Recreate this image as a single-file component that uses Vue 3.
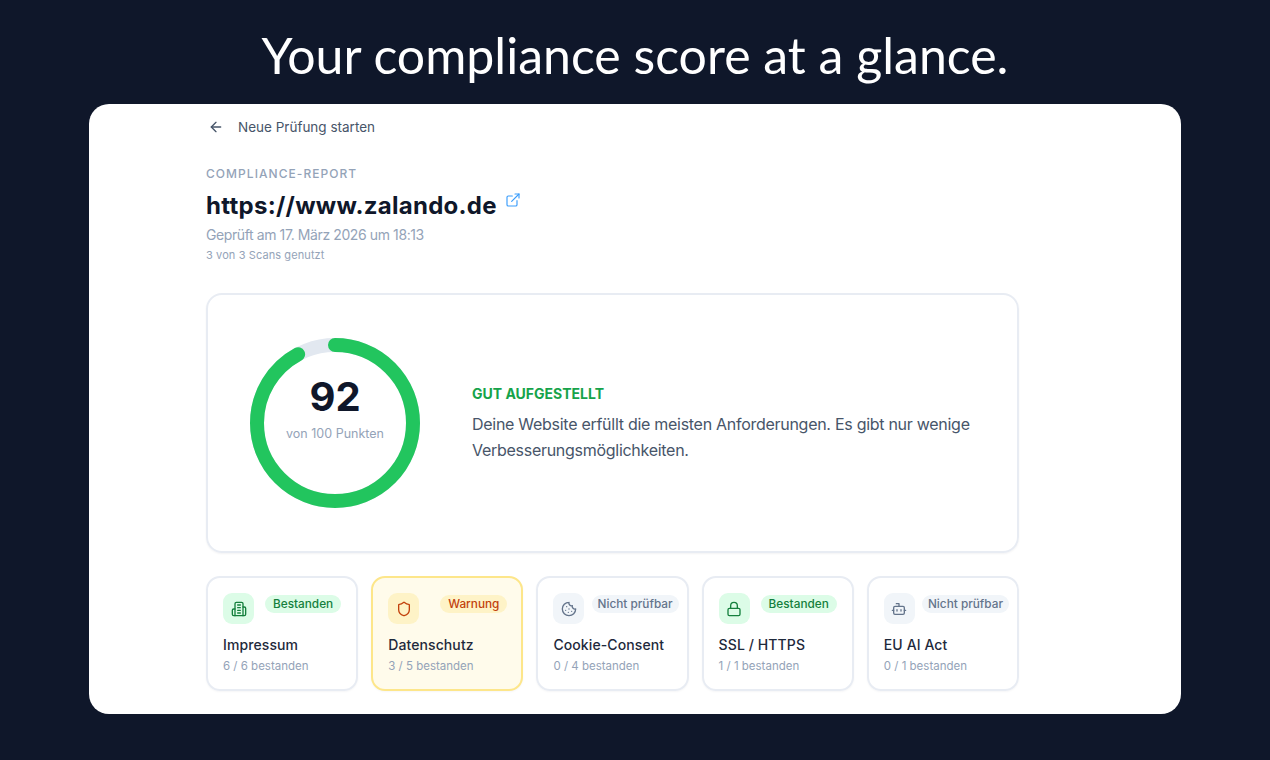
<script setup>
const circumference = 2 * Math.PI * 78
const score = 92

const checks = [
  { name: 'Impressum', status: 'Bestanden', tone: 'pass', detail: '6 / 6 bestanden', icon: 'building' },
  { name: 'Datenschutz', status: 'Warnung', tone: 'warn', detail: '3 / 5 bestanden', icon: 'shield' },
  { name: 'Cookie-Consent', status: 'Nicht prüfbar', tone: 'na', detail: '0 / 4 bestanden', icon: 'cookie' },
  { name: 'SSL / HTTPS', status: 'Bestanden', tone: 'pass', detail: '1 / 1 bestanden', icon: 'lock' },
  { name: 'EU AI Act', status: 'Nicht prüfbar', tone: 'na', detail: '0 / 1 bestanden', icon: 'bot' }
]
</script>

<template>
  <div class="page">
    <h1 class="headline">Your compliance score at a glance.</h1>

    <div class="sheet">
      <div class="report">
        <div class="back">
          <svg width="16" height="16" viewBox="0 0 24 24" fill="none" stroke="currentColor" stroke-width="2" stroke-linecap="round" stroke-linejoin="round">
            <path d="M19 12H5" />
            <path d="M12 19l-7-7 7-7" />
          </svg>
          <span>Neue Prüfung starten</span>
        </div>

        <div class="eyebrow">COMPLIANCE-REPORT</div>
        <div class="url-row">
          <span class="url">https://www.zalando.de</span>
          <svg class="url-link" width="16" height="16" viewBox="0 0 24 24" fill="none" stroke="currentColor" stroke-width="1.75" stroke-linecap="round" stroke-linejoin="round">
            <path d="M18 13v6a2 2 0 0 1-2 2H5a2 2 0 0 1-2-2V8a2 2 0 0 1 2-2h6" />
            <path d="M15 3h6v6" />
            <path d="M10 14L21 3" />
          </svg>
        </div>
        <div class="checked">Geprüft am 17. März 2026 um 18:13</div>
        <div class="scans">3 von 3 Scans genutzt</div>

        <!-- Score -->
        <div class="score-card">
          <div class="ring">
            <svg width="170" height="170" viewBox="0 0 170 170">
              <circle cx="85" cy="85" r="78" fill="none" stroke="#e2e8f0" stroke-width="14" />
              <circle
                cx="85" cy="85" r="78" fill="none" stroke="#22c55e" stroke-width="14" stroke-linecap="round"
                transform="rotate(-90 85 85)"
                :stroke-dasharray="`${circumference * score / 100} ${circumference}`"
              />
            </svg>
            <div class="ring-label">
              <div class="ring-value">{{ score }}</div>
              <div class="ring-sub">von 100 Punkten</div>
            </div>
          </div>
          <div class="verdict">
            <div class="verdict-title">GUT AUFGESTELLT</div>
            <p>Deine Website erfüllt die meisten Anforderungen. Es gibt nur wenige Verbesserungsmöglichkeiten.</p>
          </div>
        </div>

        <!-- Categories -->
        <div class="checks">
          <div v-for="item in checks" :key="item.name" class="check" :class="item.tone">
            <div class="check-top">
              <div class="check-icon">
                <svg width="16" height="16" viewBox="0 0 24 24" fill="none" stroke="currentColor" stroke-width="2" stroke-linecap="round" stroke-linejoin="round">
                  <template v-if="item.icon === 'building'">
                    <path d="M6 22V4a2 2 0 0 1 2-2h8a2 2 0 0 1 2 2v18Z" />
                    <path d="M6 12H4a2 2 0 0 0-2 2v6a2 2 0 0 0 2 2h2" />
                    <path d="M18 9h2a2 2 0 0 1 2 2v9a2 2 0 0 1-2 2h-2" />
                    <path d="M10 6h4M10 10h4M10 14h4M10 18h4" />
                  </template>
                  <path v-else-if="item.icon === 'shield'" d="M20 13c0 5-3.5 7.5-7.66 8.95a1 1 0 0 1-.67-.01C7.5 20.5 4 18 4 13V6a1 1 0 0 1 1-1c2 0 4.5-1.2 6.24-2.72a1.17 1.17 0 0 1 1.52 0C14.51 3.81 17 5 19 5a1 1 0 0 1 1 1z" />
                  <template v-else-if="item.icon === 'cookie'">
                    <path d="M12 2a10 10 0 1 0 10 10 4 4 0 0 1-5-5 4 4 0 0 1-5-5" />
                    <path d="M8.5 8.5v.01M16 15.5v.01M12 12v.01M11 17v.01M7 14v.01" />
                  </template>
                  <template v-else-if="item.icon === 'lock'">
                    <rect x="3" y="11" width="18" height="11" rx="2" />
                    <path d="M7 11V7a5 5 0 0 1 10 0v4" />
                  </template>
                  <template v-else>
                    <path d="M12 8V4H8" />
                    <rect x="4" y="8" width="16" height="12" rx="2" />
                    <path d="M2 14h2M20 14h2M15 13v2M9 13v2" />
                  </template>
                </svg>
              </div>
              <span class="pill">{{ item.status }}</span>
            </div>
            <div class="check-name">{{ item.name }}</div>
            <div class="check-detail">{{ item.detail }}</div>
          </div>
        </div>
      </div>
    </div>
  </div>
</template>

<style>
html, body {
  margin: 0;
  background: #0f172a;
}
</style>

<style scoped>
.page {
  height: 760px;
  box-sizing: border-box;
  background: #0f172a;
  padding: 0 89px;
  font-family: Inter, "Liberation Sans", sans-serif;
  overflow: hidden;
}

.headline {
  margin: 0;
  height: 104px;
  line-height: 110px;
  text-align: center;
  color: #fff;
  font-family: Lato, sans-serif;
  font-size: 50px;
  font-weight: 400;
}

.sheet {
  height: 610px;
  background: #fff;
  border-radius: 20px;
  overflow: hidden;
}

.report {
  width: 813px;
  margin-left: 117px;
}

.back {
  display: flex;
  align-items: center;
  gap: 14px;
  height: 46px;
  margin-left: 2px;
  color: #475569;
  font-size: 13.5px;
  font-weight: 400;
}

.back svg {
  flex: none;
}

.eyebrow {
  margin-top: 16px;
  color: #94a3b8;
  font-size: 12px;
  font-weight: 500;
  letter-spacing: 1.05px;
  line-height: 16px;
}

.url-row {
  display: flex;
  align-items: flex-start;
  gap: 8px;
  margin-top: 8px;
}

.url {
  color: #0f172a;
  font-size: 24px;
  font-weight: 700;
  letter-spacing: 0.28px;
  line-height: 32px;
}

.url-link {
  margin-top: 2px;
  color: #3b9dfb;
}

.checked {
  margin-top: 3px;
  color: #94a3b8;
  font-size: 14px;
  letter-spacing: -0.4px;
  line-height: 20px;
}

.scans {
  margin-top: 2px;
  color: #94a3b8;
  font-size: 11px;
  letter-spacing: 0.1px;
  line-height: 16px;
}

.score-card {
  display: flex;
  align-items: center;
  gap: 52px;
  box-sizing: border-box;
  height: 260px;
  margin-top: 30px;
  padding: 0 40px 0 42px;
  border: 2px solid #e8ecf3;
  border-radius: 16px;
  box-shadow: 0 1px 2px rgba(15, 23, 42, 0.05);
}

.ring {
  position: relative;
  flex: none;
  width: 170px;
  height: 170px;
}

.ring svg {
  display: block;
}

.ring-label {
  position: absolute;
  inset: 0 0 32px;
  display: flex;
  flex-direction: column;
  align-items: center;
  justify-content: center;
}

.ring-value {
  color: #0f172a;
  font-size: 40px;
  font-weight: 700;
  line-height: 48px;
}

.ring-sub {
  margin-top: 5px;
  color: #94a3b8;
  font-size: 12.5px;
  line-height: 16px;
}

.verdict {
  flex: 1;
}

.verdict-title {
  color: #16a34a;
  font-size: 14px;
  font-weight: 700;
  line-height: 20px;
}

.verdict p {
  margin: 7px 0 0;
  color: #475569;
  font-size: 16px;
  letter-spacing: -0.28px;
  line-height: 26px;
}

.checks {
  display: grid;
  grid-template-columns: repeat(5, 1fr);
  gap: 13px;
  margin-top: 23px;
}

.check {
  box-sizing: border-box;
  height: 115px;
  padding: 15px 0 0 15px;
  border: 2px solid #e8ecf3;
  border-radius: 14px;
  box-shadow: 0 1px 2px rgba(15, 23, 42, 0.04);
  overflow: hidden;
}

.check.warn {
  background: #fffbeb;
  border-color: #fde68a;
}

.check-top {
  display: flex;
  align-items: flex-start;
  justify-content: space-between;
  padding-right: 15px;
}

.check-icon {
  display: flex;
  align-items: center;
  justify-content: center;
  flex: none;
  width: 31px;
  height: 31px;
  border-radius: 9px;
}

.pill {
  margin-top: 2px;
  padding: 0 8px;
  border-radius: 10px;
  font-size: 11.8px;
  font-weight: 500;
  line-height: 18px;
  white-space: nowrap;
}

.pass .check-icon,
.pass .pill {
  background: #dcfce7;
  color: #15803d;
}

.warn .check-icon,
.warn .pill {
  background: #fef3c7;
  color: #c2410c;
}

.na .check-icon,
.na .pill {
  background: #f1f5f9;
  color: #64748b;
}

.warn .check-top {
  padding-right: 14px;
}

.na .check-top {
  padding-right: 8px;
}

.na .pill {
  padding: 0 6px;
}

.check-name {
  margin-top: 11px;
  color: #1e293b;
  font-size: 14px;
  font-weight: 500;
  letter-spacing: 0.1px;
  line-height: 20px;
}

.check-detail {
  margin-top: 3px;
  color: #94a3b8;
  font-size: 11.5px;
  line-height: 16px;
}
</style>
